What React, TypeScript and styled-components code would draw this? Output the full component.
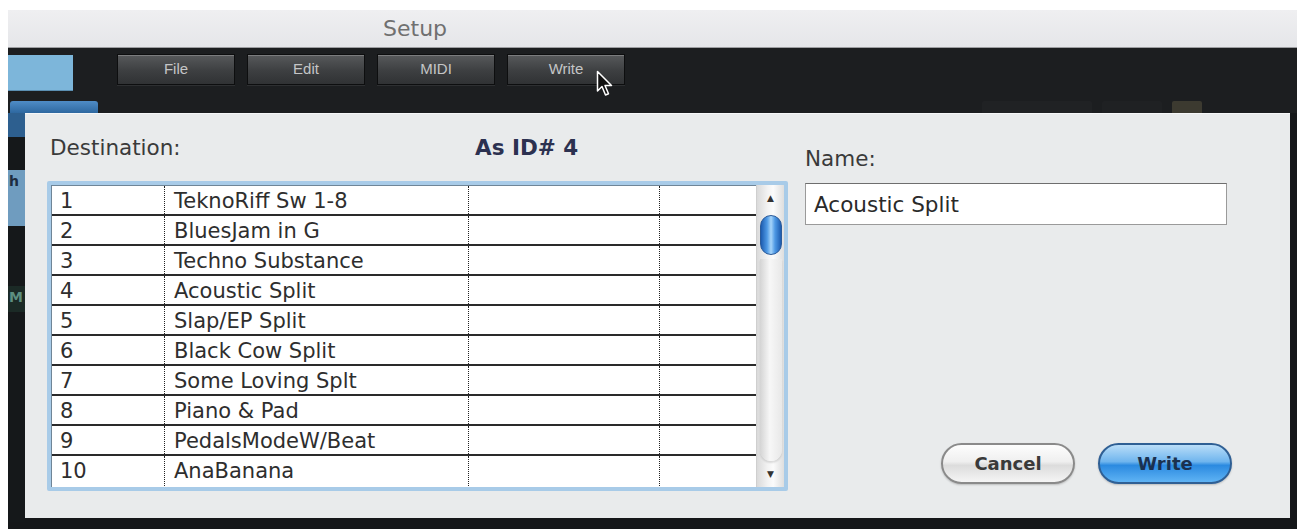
import styled, { createGlobalStyle } from "styled-components";

const GlobalStyle = createGlobalStyle`
  html, body {
    margin: 0;
    padding: 0;
    background: #ffffff;
  }
  body {
    font-family: "DejaVu Sans", "Liberation Sans", sans-serif;
  }
`;

const Window = styled.div`
  width: 1289px;
  margin: 10px 0 0 8px;
`;

const TitleBar = styled.div`
  height: 37px;
  display: flex;
  align-items: center;
  padding-left: 375px;
  background: linear-gradient(#efeff1, #e5e6e9);
  border-bottom: 1px solid #9d9ea1;
  color: #707070;
  font-size: 22px;
`;

const Toolbar = styled.div`
  position: relative;
  height: 65px;
  display: flex;
  background: #1c1e20;
`;

const ToolbarLeft = styled.div`
  width: 90px;
  display: flex;
  flex-direction: column;
`;

const LightBox = styled.div`
  width: 65px;
  height: 35px;
  margin-top: 7px;
  background: #7db6da;
  border-bottom: 1px solid #5b8fb2;
`;

const BlueTab = styled.div`
  width: 88px;
  height: 12px;
  margin-top: 10px;
  margin-left: 2px;
  background: linear-gradient(#4f8cc6, #2e68a0);
  border-radius: 3px 3px 0 0;
`;

const MenuButtons = styled.div`
  display: flex;
  gap: 12px;
  margin-left: 19px;
  margin-top: 6px;
`;

const MenuButton = styled.div`
  width: 118px;
  height: 31px;
  box-sizing: border-box;
  padding-top: 5px;
  text-align: center;
  font-family: "Liberation Sans", Arial, sans-serif;
  font-size: 15px;
  color: #c4c5c6;
  background: linear-gradient(#57595b, #3d3f41 55%, #303234);
  border: 1px solid #0d0e0f;
  box-shadow: inset 0 1px 0 rgba(255, 255, 255, 0.22), 0 1px 0 rgba(255, 255, 255, 0.08);
`;

const Cursor = styled.svg`
  position: absolute;
  left: 588px;
  top: 22px;
`;

const FaintItem = styled.div<{ $w: number; $c: string }>`
  height: 12px;
  width: ${(p) => p.$w}px;
  background: ${(p) => p.$c};
  border-radius: 2px 2px 0 0;
`;

const ToolbarRight = styled.div`
  margin-left: auto;
  margin-right: 95px;
  align-self: flex-end;
  display: flex;
  gap: 10px;
`;

const Body = styled.div`
  display: flex;
  background: #151719;
  padding: 0 7px 7px 0;
`;

const LeftStrip = styled.div`
  width: 17px;
  display: flex;
  flex-direction: column;
  overflow: hidden;
`;

const StripBlock = styled.div<{ $h: number; $bg: string; $color?: string }>`
  height: ${(p) => p.$h}px;
  background: ${(p) => p.$bg};
  color: ${(p) => p.$color || "#555"};
  font-weight: bold;
  font-size: 14px;
  line-height: 22px;
  text-indent: 1px;
`;

const Dialog = styled.div`
  flex: 1;
  height: 405px;
  box-sizing: border-box;
  display: grid;
  grid-template-columns: 741px 427px;
  column-gap: 17px;
  padding: 21px 0 0 22px;
  background: #e9ebec;
  border-top: 1px solid #f6f7f8;
  color: #333;
`;

const LeftCol = styled.div`
  display: flex;
  flex-direction: column;
`;

const Header = styled.div`
  display: flex;
  align-items: baseline;
  height: 29px;
  padding-left: 3px;
`;

const Label = styled.div`
  font-size: 21.5px;
  color: #3a3a3a;
`;

const DestLabel = styled(Label)`
  width: 425px;
`;

const IdLabel = styled.div`
  font-size: 21.5px;
  font-weight: bold;
  color: #2c3150;
`;

const TableFrame = styled.div`
  margin-top: 17px;
  height: 310px;
  box-sizing: border-box;
  border: 4px solid #a8cbe8;
  border-radius: 2px;
  display: flex;
  background: #fff;
`;

const Rows = styled.div`
  flex: 1;
  display: flex;
  flex-direction: column;
  border-left: 1px solid #6f8597;
  border-top: 1px solid #6f8597;
`;

const Row = styled.div<{ $last?: boolean }>`
  height: 30px;
  box-sizing: border-box;
  display: grid;
  grid-template-columns: 113px 304px 191px 1fr;
  border-bottom: ${(p) => (p.$last ? "none" : "2px solid #2a2a2a")};
`;

const Cell = styled.div<{ $pad?: number }>`
  border-right: 1px dotted #222;
  padding-left: ${(p) => p.$pad ?? 0}px;
  padding-top: 3px;
  font-size: 21px;
  line-height: 25px;
  color: #2e2e2e;
  white-space: nowrap;
  &:last-child {
    border-right: none;
  }
`;

const Scrollbar = styled.div`
  width: 27px;
  display: flex;
  flex-direction: column;
  align-items: center;
  background: linear-gradient(90deg, #dadada, #f3f3f3 40%, #fbfbfb 60%, #dedede);
  border-left: 1px solid #cfcfcf;
`;

const Arrow = styled.div`
  height: 26px;
  font-size: 9px;
  line-height: 26px;
  color: #333;
`;

const Thumb = styled.div`
  width: 22px;
  height: 40px;
  margin-top: 4px;
  box-sizing: border-box;
  border-radius: 11px;
  border: 1px solid #2b5b9a;
  background: linear-gradient(90deg, #1d5cb0, #4d98e4 30%, #a7d5fa 50%, #4d98e4 70%, #1d5cb0);
`;

const Track = styled.div`
  flex: 1;
  width: 22px;
  margin-top: 4px;
  border-radius: 0 0 11px 11px;
  background: linear-gradient(90deg, #d4d4d4, #f7f7f7 45%, #e8e8e8);
  box-shadow: 0 2px 2px rgba(0, 0, 0, 0.12);
`;

const RightCol = styled.div`
  display: flex;
  flex-direction: column;
  padding-top: 11px;
`;

const NameInput = styled.div`
  width: 422px;
  height: 42px;
  margin-top: 12px;
  box-sizing: border-box;
  padding-left: 8px;
  background: #fff;
  border: 1px solid #9a9a9a;
  border-top-color: #6e6e6e;
  font-size: 21.5px;
  line-height: 42px;
  color: #2a2a2a;
`;

const Buttons = styled.div`
  margin-top: auto;
  margin-bottom: 34px;
  display: flex;
  justify-content: flex-end;
  gap: 23px;
`;

const PillButton = styled.div<{ $primary?: boolean }>`
  width: 134px;
  height: 41px;
  box-sizing: border-box;
  border-radius: 21px;
  text-align: center;
  font-size: 18px;
  font-weight: bold;
  line-height: 38px;
  color: ${(p) => (p.$primary ? "#1a3150" : "#3a3a3a")};
  border: 2px solid ${(p) => (p.$primary ? "#2f5f94" : "#8a8a8a")};
  background: ${(p) =>
    p.$primary
      ? "linear-gradient(#b9ddf8, #6fb5ee 45%, #2b8ae0 55%, #5fb3f4)"
      : "linear-gradient(#fdfdfd, #efefef 45%, #dcdcdc 55%, #f5f5f5)"};
  box-shadow: 0 1px 2px rgba(0, 0, 0, 0.2);
`;

const rows = [
  "TeknoRiff Sw 1-8",
  "BluesJam in G",
  "Techno Substance",
  "Acoustic Split",
  "Slap/EP Split",
  "Black Cow Split",
  "Some Loving Splt",
  "Piano & Pad",
  "PedalsModeW/Beat",
  "AnaBanana",
];

export default function App() {
  return (
    <>
      <GlobalStyle />
      <Window>
        <TitleBar>Setup</TitleBar>
        <Toolbar>
          <ToolbarLeft>
            <LightBox />
            <BlueTab />
          </ToolbarLeft>
          <MenuButtons>
            <MenuButton>File</MenuButton>
            <MenuButton>Edit</MenuButton>
            <MenuButton>MIDI</MenuButton>
            <MenuButton>Write</MenuButton>
          </MenuButtons>
          <ToolbarRight>
            <FaintItem $w={110} $c="#202224" />
            <FaintItem $w={60} $c="#1f2123" />
            <FaintItem $w={30} $c="#3c3a30" />
          </ToolbarRight>
          <Cursor width="18" height="28" viewBox="0 0 18 28">
            <path
              d="M1.5 1.5 L1.5 21 L6 16.5 L9.5 25 L12.5 23.7 L9 15.5 L15.5 15.5 Z"
              fill="#111"
              stroke="#fff"
              strokeWidth="1.5"
              strokeLinejoin="round"
            />
          </Cursor>
        </Toolbar>
        <Body>
          <LeftStrip>
            <StripBlock $h={24} $bg="#2d5f8f" />
            <StripBlock $h={33} $bg="#15181a" />
            <StripBlock $h={56} $bg="#6f9cbf" $color="#1d2c40">h</StripBlock>
            <StripBlock $h={60} $bg="#15181a" />
            <StripBlock $h={26} $bg="#1b2a26" $color="#5d8f80">M</StripBlock>
            <StripBlock $h={210} $bg="#15181a" />
          </LeftStrip>
          <Dialog>
            <LeftCol>
              <Header>
                <DestLabel>Destination:</DestLabel>
                <IdLabel>As ID# 4</IdLabel>
              </Header>
              <TableFrame>
                <Rows>
                  {rows.map((name, i) => (
                    <Row key={i} $last={i === rows.length - 1}>
                      <Cell $pad={8}>{i + 1}</Cell>
                      <Cell $pad={9}>{name}</Cell>
                      <Cell />
                      <Cell />
                    </Row>
                  ))}
                </Rows>
                <Scrollbar>
                  <Arrow>▲</Arrow>
                  <Thumb />
                  <Track />
                  <Arrow>▼</Arrow>
                </Scrollbar>
              </TableFrame>
            </LeftCol>
            <RightCol>
              <Label>Name:</Label>
              <NameInput>Acoustic Split</NameInput>
              <Buttons>
                <PillButton>Cancel</PillButton>
                <PillButton $primary>Write</PillButton>
              </Buttons>
            </RightCol>
          </Dialog>
        </Body>
      </Window>
    </>
  );
}
